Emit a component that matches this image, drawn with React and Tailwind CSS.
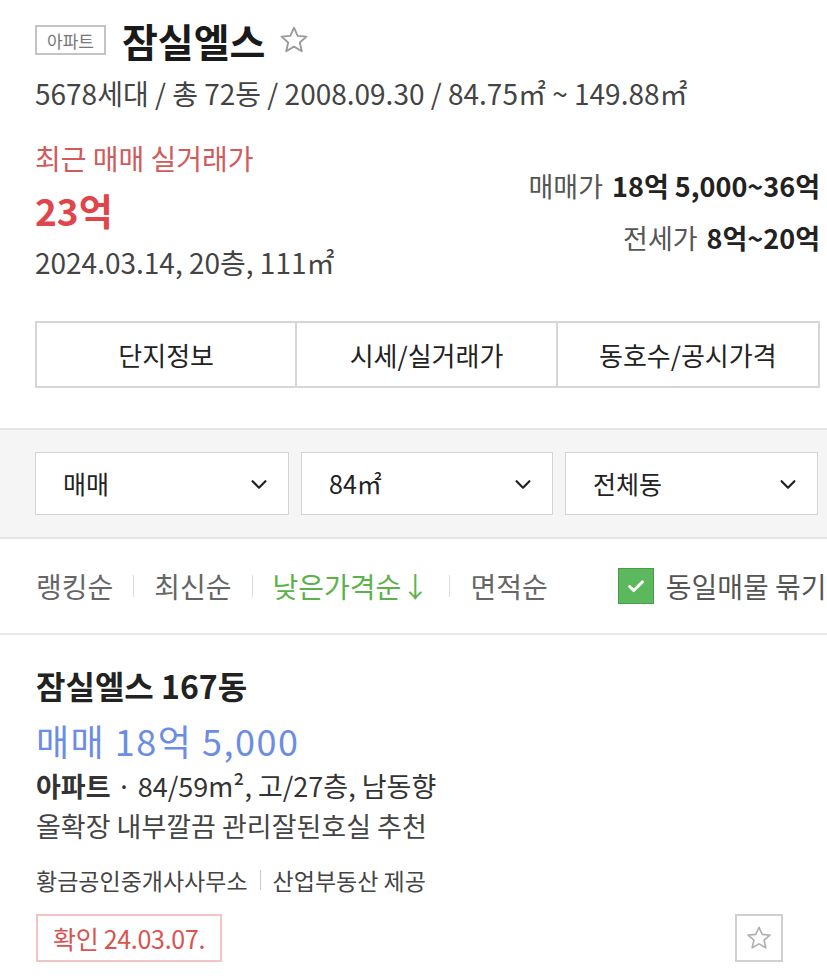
import React from "react";

const font = { fontFamily: '"Noto Sans CJK KR", "Noto Sans", sans-serif' };

function Star({ size = 30, color = "#9a9a9a" }) {
  return (
    <svg width={size} height={size} viewBox="0 0 24 24" fill="none" stroke={color} strokeWidth="1.4" strokeLinejoin="round">
      <path d="M12 2.8l2.75 6.1 6.6.6-5 4.4 1.5 6.5L12 17l-5.85 3.4 1.5-6.5-5-4.4 6.6-.6z" />
    </svg>
  );
}

function Chevron() {
  return (
    <svg width="22" height="22" viewBox="0 0 24 24" fill="none" stroke="#222" strokeWidth="2.4" strokeLinecap="round" strokeLinejoin="round">
      <path d="M5 9l7 7 7-7" />
    </svg>
  );
}

function Select({ label, className }) {
  return (
    <div className={`h-[63px] bg-white border border-[#d4d4d4] flex items-center justify-between pl-[27px] pr-[18px] ${className}`}>
      <span className="text-[25px] leading-none text-[#222]">{label}</span>
      <Chevron />
    </div>
  );
}

function Sep() {
  return <span className="mx-[20px] w-px h-[22px] bg-[#dcdcdc] shrink-0" />;
}

export default function App() {
  return (
    <div style={font} className="w-[827px] h-[978px] bg-white overflow-hidden text-[#333]">
      <div className="pl-[35px] pr-[7px]">
        <div className="h-[44px] mt-[18px] flex items-center">
          <span className="border-2 border-[#c4c4c4] h-[30px] px-[10px] flex items-center text-[17px] text-[#777] leading-none">아파트</span>
          <span className="ml-[16px] text-[39px] font-bold text-[#1a1a1a] leading-none">잠실엘스</span>
          <span className="ml-[13px] flex items-center"><Star size={32} /></span>
        </div>
        <div className="h-[30px] mt-[16px] flex items-center text-[28px] leading-none text-[#444] whitespace-nowrap">
          5678세대 / 총 72동 / 2008.09.30 / 84.75㎡ ~ 149.88㎡
        </div>
        <div className="flex justify-between mt-[35px]">
          <div className="flex flex-col">
            <div className="h-[30px] flex items-center text-[28px] leading-none text-[#d25a5a]">최근 매매 실거래가</div>
            <div className="h-[40px] mt-[17px] flex items-center text-[37px] font-bold text-[#e0454b] leading-none">23억</div>
            <div className="h-[30px] mt-[17px] flex items-center text-[28px] leading-none text-[#444]">2024.03.14, 20층, 111㎡</div>
          </div>
          <div className="flex flex-col items-end pt-[27px]">
            <div className="h-[30px] flex items-center text-[27px] leading-none text-[#555] whitespace-nowrap">매매가<span className="ml-[9px] font-bold text-[#222]">18억 5,000~36억</span></div>
            <div className="h-[30px] mt-[22px] flex items-center text-[27px] leading-none text-[#555] whitespace-nowrap">전세가<span className="ml-[9px] font-bold text-[#222]">8억~20억</span></div>
          </div>
        </div>
        <div className="mt-[44px] h-[67px] border-2 border-[#d6d6d6] grid grid-cols-3 text-[26px] leading-none text-[#222]">
          <div className="flex items-center justify-center border-r-2 border-[#d6d6d6]">단지정보</div>
          <div className="flex items-center justify-center border-r-2 border-[#d6d6d6]">시세/실거래가</div>
          <div className="flex items-center justify-center">동호수/공시가격</div>
        </div>
      </div>

      <div className="mt-[40px] h-[111px] bg-[#f5f5f5] border-t-2 border-b-2 border-[#e6e6e6] pt-[22px] pl-[35px] pr-[9px] flex gap-[12px]">
        <Select label="매매" className="w-[254px]" />
        <Select label="84㎡" className="w-[252px]" />
        <Select label="전체동" className="w-[253px]" />
      </div>

      <div className="h-[96px] border-b-2 border-[#e8e8e8] pl-[36px] flex items-center text-[28px] leading-none text-[#666] whitespace-nowrap">
        <span>랭킹순</span>
        <Sep />
        <span>최신순</span>
        <Sep />
        <span className="text-[#5cb24a]">낮은가격순↓</span>
        <Sep />
        <span>면적순</span>
        <span className="ml-[70px] shrink-0 w-[36px] h-[36px] bg-[#5cb85c] border border-[#4a9a4a] flex items-center justify-center">
          <svg width="22" height="22" viewBox="0 0 24 24" fill="none" stroke="#fff" strokeWidth="3.2" strokeLinecap="round" strokeLinejoin="round"><path d="M5 12.5l4.5 4.5L19 7.5" /></svg>
        </span>
        <span className="ml-[12px] text-[#555]">동일매물 묶기</span>
      </div>

      <div className="pl-[36px] pr-[44px] pt-[32px]">
        <div className="h-[36px] flex items-center text-[32px] leading-none font-bold text-[#222]">잠실엘스 167동</div>
        <div className="h-[40px] mt-[17px] flex items-center text-[36px] leading-none tracking-[1.5px] text-[#6b8de3]">매매 18억 5,000</div>
        <div className="h-[30px] mt-[10px] flex items-center text-[27px] leading-none text-[#333] whitespace-nowrap"><span className="font-bold">아파트</span>&nbsp;· 84/59m², 고/27층, 남동향</div>
        <div className="h-[30px] mt-[10px] flex items-center text-[27px] leading-none text-[#444]">올확장 내부깔끔 관리잘된호실 추천</div>
        <div className="h-[26px] mt-[27px] flex items-center text-[23px] leading-none text-[#444] whitespace-nowrap">
          <span>황금공인중개사사무소</span>
          <span className="mx-[12px] w-px h-[20px] bg-[#ccc]" />
          <span>산업부동산 제공</span>
        </div>
        <div className="mt-[21px] flex items-center justify-between">
          <span className="h-[48px] px-[15px] border-2 border-[#f2c4c4] flex items-center text-[25px] leading-none text-[#d9534f] tracking-[-0.3px]">확인 24.03.07.</span>
          <span className="w-[48px] h-[48px] border-2 border-[#d0d0d0] flex items-center justify-center"><Star size={28} color="#b0b0b0" /></span>
        </div>
      </div>
    </div>
  );
}
